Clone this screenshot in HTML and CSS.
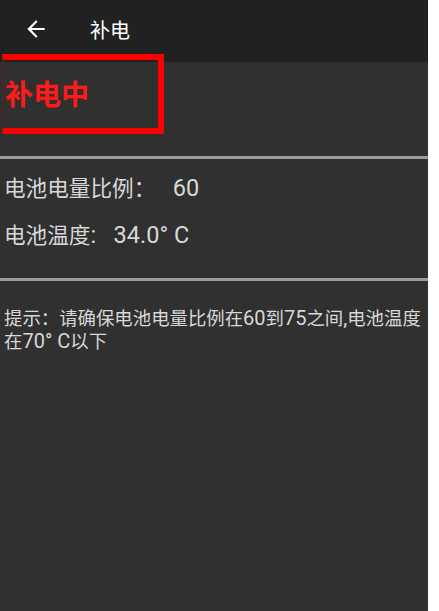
FILE: index.html
```html
<!DOCTYPE html>
<html lang="zh">
<head>
<meta charset="utf-8">
<title>补电</title>
<link rel="stylesheet" href="styles.css">
</head>
<body>
<div class="screen">
  <header class="toolbar">
    <svg class="back" viewBox="0 0 24 24" width="26" height="26"><path d="M20 11H7.83l5.59-5.59L12 4l-8 8 8 8 1.41-1.41L7.83 13H20v-2z" fill="#fff"/></svg>
    <span class="title">补电</span>
  </header>
  <section class="status">
    <span class="status-text">补电中</span>
  </section>
  <div class="divider"></div>
  <section class="info">
    <div class="info-line"><span class="cj">电池电量比例：</span>   60</div>
    <div class="info-line"><span class="cj">电池温度</span>:   34.0° C</div>
  </section>
  <div class="divider"></div>
  <p class="hint"><span class="cj">提示：请确保电池电量比例在</span>60<span class="cj">到</span>75<span class="cj">之间</span>,<span class="cj">电池温度在</span>70° C<span class="cj">以下</span></p>
  <div class="highlight"></div>
</div>
</body>
</html>
```

FILE: styles.css
```css
html, body {
  margin: 0;
  padding: 0;
  background: #ffffff;
}
.screen {
  position: relative;
  width: 428px;
  height: 611px;
  background: #303030;
  font-family: Roboto, "Noto Sans CJK SC", sans-serif;
  overflow: hidden;
}
.toolbar {
  height: 62px;
  background: #212121;
  display: flex;
  align-items: center;
  padding-left: 23px;
  gap: 41px;
  box-sizing: border-box;
}
.back {
  display: block;
  margin-top: -4px;
}
.title {
  color: #ffffff;
  font-family: "Noto Sans CJK SC", sans-serif;
  font-size: 20px;
  line-height: 24px;
  margin-top: -2px;
}
.status {
  height: 94px;
  box-sizing: border-box;
  padding: 14px 0 0 5px;
}
.status-text {
  color: #ff1a1a;
  font-family: "Noto Sans CJK SC", sans-serif;
  font-size: 28px;
  font-weight: bold;
  line-height: 34px;
}
.divider {
  height: 3px;
  background: #9c9c9c;
}
.cj {
  font-family: "Noto Sans CJK SC", sans-serif;
  font-size: 0.92em;
}
.info {
  padding: 5px 0 20px 4px;
}
.info-line {
  color: #d8d8d8;
  font-size: 23.5px;
  line-height: 46px;
  white-space: pre;
}
.hint {
  margin: 25px 0 0 4px;
  color: #d8d8d8;
  font-size: 20px;
  line-height: 22px;
}
.highlight {
  position: absolute;
  left: 0;
  top: 54px;
  width: 155px;
  height: 68px;
  border: 6px solid #ff0000;
  border-left: 1px solid #6a1a1a;
  margin-left: 2px;
}
```
